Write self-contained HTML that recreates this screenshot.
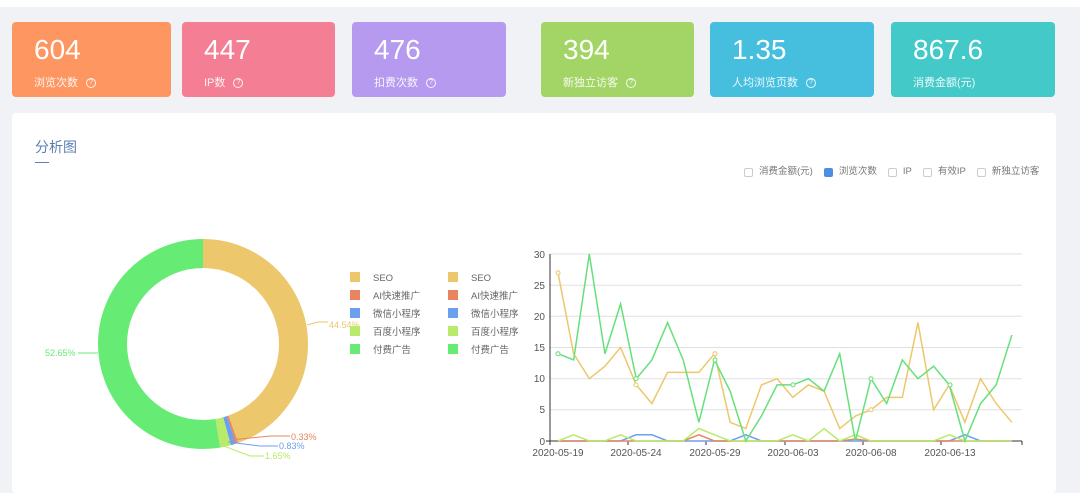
<!DOCTYPE html>
<html><head><meta charset="utf-8"><style>
*{margin:0;padding:0;box-sizing:border-box}
body{width:1080px;height:487px;background:#f0f2f5;font-family:"Liberation Sans","Noto Sans CJK SC",sans-serif;position:relative;overflow:hidden}
.top{position:absolute;left:0;top:0;width:1080px;height:7px;background:#fff}
.card{position:absolute;top:22px;height:75px;border-radius:4px;color:#fff}
.card .n{position:absolute;left:22px;top:12px;font-size:28px;line-height:32px}
.card .l{position:absolute;left:22px;top:73%;font-size:11px;line-height:12px;opacity:.9;white-space:nowrap}
.q{display:inline-block;width:10px;height:10px;border:1px solid #fff;border-radius:50%;font-size:7px;line-height:8px;text-align:center;margin-left:8px;vertical-align:middle}
.panel{position:absolute;left:12px;top:113px;width:1044px;height:380px;background:#fff;border-radius:4px}
.title{position:absolute;left:35px;top:137px;font-size:14px;color:#5a7fb0}
.ul{position:absolute;left:35px;top:162px;width:14px;height:1px;background:#5a7fb0}
.legs{position:absolute;left:744px;top:166px;display:flex;align-items:center;font-size:9.5px;color:#777;white-space:nowrap;line-height:12px}
.legs span.t{margin-right:11px}
.cb{display:inline-block;width:9px;height:9px;border:1px solid #ccc;border-radius:2px;margin-right:6px}
.cb.on{background:#4a90e2;border-color:#4a90e2}
</style></head><body>
<div class="top"></div>
<div class="card" style="left:12px;width:159px;background:#fe9661"><div class="n">604</div><div class="l">浏览次数<span class="q">?</span></div></div>
<div class="card" style="left:182px;width:153px;background:#f47f95"><div class="n">447</div><div class="l">IP数<span class="q">?</span></div></div>
<div class="card" style="left:352px;width:154px;background:#b59af0"><div class="n">476</div><div class="l">扣费次数<span class="q">?</span></div></div>
<div class="card" style="left:541px;width:153px;background:#a2d566"><div class="n">394</div><div class="l">新独立访客<span class="q">?</span></div></div>
<div class="card" style="left:710px;width:164px;background:#46bfdf"><div class="n">1.35</div><div class="l">人均浏览页数<span class="q">?</span></div></div>
<div class="card" style="left:891px;width:164px;background:#44c9c9"><div class="n">867.6</div><div class="l">消费金额(元)</div></div>
<div class="panel"></div>
<div class="title">分析图</div><div class="ul"></div>
<div class="legs"><span class="cb"></span><span class="t">消费金额(元)</span><span class="cb on"></span><span class="t">浏览次数</span><span class="cb"></span><span class="t">IP</span><span class="cb"></span><span class="t">有效IP</span><span class="cb"></span><span>新独立访客</span></div>
<svg width="1080" height="487" style="position:absolute;left:0;top:0" font-family="Liberation Sans, Noto Sans CJK SC, sans-serif">
<g transform="translate(203,344) rotate(-90)" fill="none" stroke-width="29">
<circle r="90.5" stroke="#edc76b" stroke-dasharray="253.3 1000" stroke-dashoffset="0"/>
<circle r="90.5" stroke="#e8855e" stroke-dasharray="1.9 1000" stroke-dashoffset="-253.3"/>
<circle r="90.5" stroke="#6b9ff0" stroke-dasharray="4.7 1000" stroke-dashoffset="-255.2"/>
<circle r="90.5" stroke="#b8ea6b" stroke-dasharray="9.4 1000" stroke-dashoffset="-259.9"/>
<circle r="90.5" stroke="#66ec75" stroke-dasharray="299.3 1000" stroke-dashoffset="-269.3"/>
</g>
<g font-size="9">
<polyline points="307,325 318,322 328,322" fill="none" stroke="#edc76b"/><text x="329" y="328" fill="#edc76b">44.54%</text>
<polyline points="230,440 270,436 290,436" fill="none" stroke="#e8855e"/><text x="291" y="440" fill="#e8855e">0.33%</text>
<polyline points="228,442 260,446 278,446" fill="none" stroke="#6b9ff0"/><text x="279" y="449" fill="#6b9ff0">0.83%</text>
<polyline points="224,446 250,456 264,456" fill="none" stroke="#b8ea6b"/><text x="265" y="459" fill="#b8ea6b">1.65%</text>
<polyline points="98,353 86,353 78,353" fill="none" stroke="#66ec75"/><text x="45" y="356" fill="#66ec75">52.65%</text>
</g>
<g font-size="9.5" fill="#666">
<rect x="350" y="272" width="10" height="10" fill="#edc76b"/><text x="373" y="281">SEO</text>
<rect x="350" y="290" width="10" height="10" fill="#e8855e"/><text x="373" y="299">AI快速推广</text>
<rect x="350" y="308" width="10" height="10" fill="#6b9ff0"/><text x="373" y="317">微信小程序</text>
<rect x="350" y="326" width="10" height="10" fill="#b8ea6b"/><text x="373" y="335">百度小程序</text>
<rect x="350" y="344" width="10" height="10" fill="#66ec75"/><text x="373" y="353">付费广告</text>
<rect x="448" y="272" width="10" height="10" fill="#edc76b"/><text x="471" y="281">SEO</text>
<rect x="448" y="290" width="10" height="10" fill="#e8855e"/><text x="471" y="299">AI快速推广</text>
<rect x="448" y="308" width="10" height="10" fill="#6b9ff0"/><text x="471" y="317">微信小程序</text>
<rect x="448" y="326" width="10" height="10" fill="#b8ea6b"/><text x="471" y="335">百度小程序</text>
<rect x="448" y="344" width="10" height="10" fill="#66ec75"/><text x="471" y="353">付费广告</text>
</g>
<g stroke="#e0e0e0" stroke-width="1">
<line x1="550" y1="254" x2="1022" y2="254"/><line x1="550" y1="285.2" x2="1022" y2="285.2"/>
<line x1="550" y1="316.3" x2="1022" y2="316.3"/><line x1="550" y1="347.5" x2="1022" y2="347.5"/>
<line x1="550" y1="378.7" x2="1022" y2="378.7"/><line x1="550" y1="409.8" x2="1022" y2="409.8"/>
</g>
<g stroke="#333"><line x1="550" y1="254" x2="550" y2="441"/><line x1="546" y1="441" x2="1022" y2="441"/>
<line x1="550" y1="441" x2="550" y2="445"/><line x1="628" y1="441" x2="628" y2="445"/><line x1="706" y1="441" x2="706" y2="445"/><line x1="785" y1="441" x2="785" y2="445"/><line x1="863" y1="441" x2="863" y2="445"/><line x1="941" y1="441" x2="941" y2="445"/><line x1="1022" y1="441" x2="1022" y2="445"/></g>
<g font-size="10" fill="#555" text-anchor="end">
<text x="545" y="258">30</text><text x="545" y="289">25</text><text x="545" y="320">20</text><text x="545" y="351">15</text><text x="545" y="382">10</text><text x="545" y="413">5</text><text x="545" y="445">0</text></g>
<g font-size="10" fill="#555" text-anchor="middle">
<text x="558" y="456">2020-05-19</text><text x="636" y="456">2020-05-24</text><text x="715" y="456">2020-05-29</text><text x="793" y="456">2020-06-03</text><text x="871" y="456">2020-06-08</text><text x="950" y="456">2020-06-13</text></g>
<g transform="translate(558,441) scale(15.65,-6.233)" fill="none" stroke-width="1.5">
<polyline vector-effect="non-scaling-stroke" stroke="#6b9ff0" points="0,0 4,0 5,1 6,1 7,0 11,0 12,1 13,0 25,0 26,1 27,0 29,0"/>
<polyline vector-effect="non-scaling-stroke" stroke="#e8855e" points="0,0 8,0 9,1 10,0 18,0 19,0.3 20,0 29,0"/>
<polyline vector-effect="non-scaling-stroke" stroke="#b8ea6b" points="0,0 1,1 2,0 3,0 4,1 5,0 8,0 9,2 10,1 11,0 14,0 15,1 16,0 17,2 18,0 19,1 20,0 24,0 25,1 26,0 29,0"/>
<polyline vector-effect="non-scaling-stroke" stroke="#edc76b" points="0,27 1,14 2,10 3,12 4,15 5,9 6,6 7,11 8,11 9,11 10,14 11,3 12,2 13,9 14,10 15,7 16,9 17,8 18,2 19,4 20,5 21,7 22,7 23,19 24,5 25,9 26,3 27,10 28,6 29,3"/>
<polyline vector-effect="non-scaling-stroke" stroke="#66e07a" points="0,14 1,13 2,30 3,14 4,22 5,10 6,13 7,19 8,13 9,3 10,13 11,8 12,0 13,4 14,9 15,9 16,10 17,8 18,14 19,0 20,10 21,6 22,13 23,10 24,12 25,9 26,0 27,6 28,9 29,17"/>
</g>
<g fill="#fff" stroke-width="1">
<circle cx="558" cy="272.7" r="2" stroke="#edc76b"/><circle cx="558" cy="353.7" r="2" stroke="#66e07a"/>
<circle cx="636" cy="384.9" r="2" stroke="#edc76b"/><circle cx="636" cy="378.7" r="2" stroke="#66e07a"/>
<circle cx="715" cy="353.7" r="2" stroke="#edc76b"/><circle cx="715" cy="360" r="2" stroke="#66e07a"/>
<circle cx="793" cy="384.9" r="2" stroke="#66e07a"/><circle cx="871" cy="409.8" r="2" stroke="#edc76b"/><circle cx="871" cy="378.7" r="2" stroke="#66e07a"/>
<circle cx="950" cy="384.9" r="2" stroke="#66e07a"/>
</g>
</svg>
</body></html>
